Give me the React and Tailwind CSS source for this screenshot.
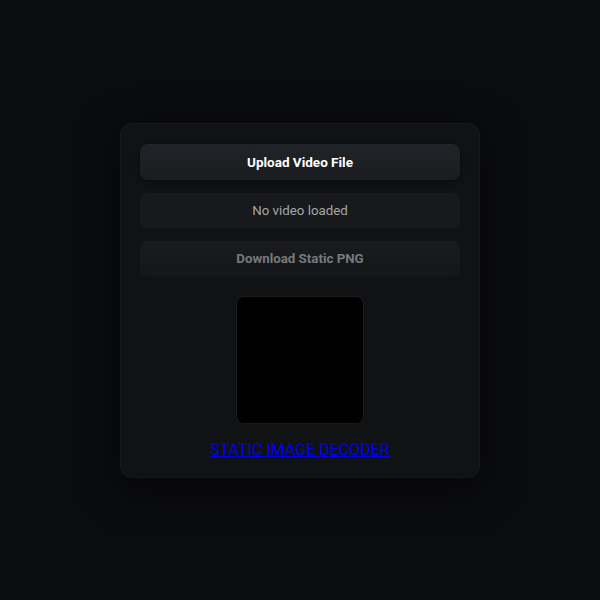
export default function App() {
  return (
    <div className="min-h-[600px] w-full bg-[#0b0c0e] flex items-start justify-center pt-[123px]" style={{ fontFamily: "Roboto, 'Noto Sans', sans-serif" }}>
      <div className="w-[360px] rounded-[12px] bg-[#111214] border border-[#17181b] shadow-[0_10px_40px_rgba(0,0,0,0.6)] px-[19px] pt-[20px] pb-[17px] flex flex-col items-stretch">
        <button className="h-[36px] rounded-[8px] bg-gradient-to-b from-[#202327] to-[#1a1c20] text-white font-bold text-[13.5px] shadow-[0_2px_6px_rgba(0,0,0,0.4)]">
          Upload Video File
        </button>
        <div className="mt-[13px] h-[35px] rounded-[8px] bg-[#18191c] text-[#a4a6aa] text-[13.3px] flex items-center justify-center">
          No video loaded
        </div>
        <button className="mt-[13px] h-[36px] rounded-[8px] bg-gradient-to-b from-[#191b1e] to-[#141619] text-[#76797e] font-bold text-[13.3px]">
          Download Static PNG
        </button>
        <div className="mt-[19px] self-center w-[128px] h-[128px] rounded-[8px] bg-black border border-[#1a1b1e]" />
        <a href="#" className="mt-[16px] self-center text-[16px] leading-[20px] text-[#0000ee] underline uppercase">
          Static Image Decoder
        </a>
      </div>
    </div>
  );
}
